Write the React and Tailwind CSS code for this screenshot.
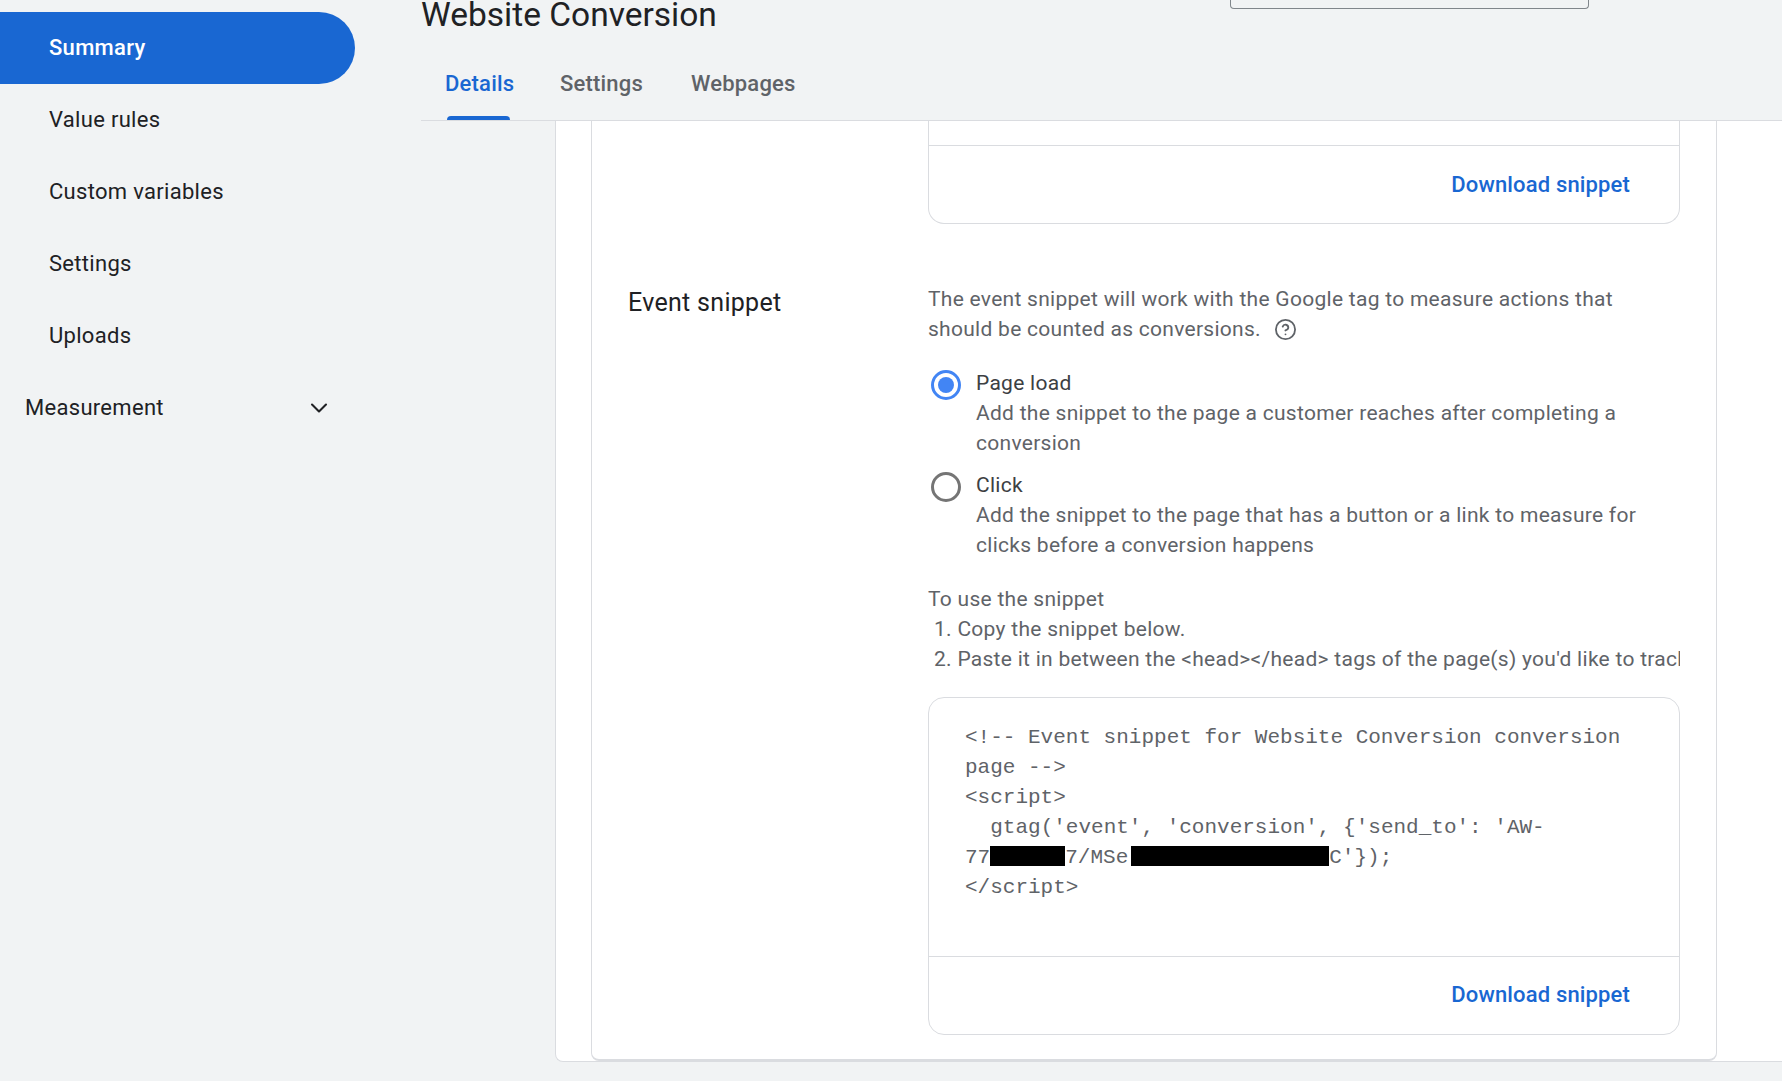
import React from "react";
import { ChevronDown, CircleHelp } from "lucide-react";

const navItems = ["Value rules", "Custom variables", "Settings", "Uploads"];

function Sidebar() {
  return (
    <aside className="w-[421px] shrink-0 pt-3 font-['Roboto',sans-serif] text-[22px] tracking-[0.3px] text-[#202124]">
      <div className="flex h-[72px] w-[355px] items-center rounded-r-[36px] bg-[#1967d2] pb-[1px] pl-[49px] font-medium text-white">
        Summary
      </div>
      {navItems.map((item) => (
        <div key={item} className="flex h-[72px] w-[355px] items-center pb-[1px] pl-[49px]">
          {item}
        </div>
      ))}
      <div className="flex h-[72px] w-[355px] items-center justify-between pb-[1px] pl-[25px] pr-[22px]">
        <span>Measurement</span>
        <ChevronDown size={28} strokeWidth={1.8} />
      </div>
    </aside>
  );
}

function DownloadRow() {
  return (
    <div className="flex h-[78px] items-center justify-end border-t border-[#dadce0] pb-[1px] pr-[49px] text-[22px] font-medium tracking-[0.15px] text-[#1967d2]">
      Download snippet
    </div>
  );
}

function Radio({ checked }) {
  return (
    <span
      className={`mt-[2px] flex h-[30px] w-[30px] shrink-0 items-center justify-center rounded-full border-[3.5px] ${
        checked ? "border-[#4285f4]" : "border-[#757575]"
      }`}
    >
      {checked && <span className="h-[16px] w-[16px] rounded-full bg-[#4285f4]" />}
    </span>
  );
}

function RadioOption({ checked, title, text }) {
  return (
    <div className="flex gap-[15px] pl-[3px]">
      <Radio checked={checked} />
      <div>
        <div className="text-[#3c4043]">{title}</div>
        <div>{text}</div>
      </div>
    </div>
  );
}

function App() {
  return (
    <div className="flex h-[1081px] w-[1782px] overflow-hidden bg-[#f1f3f4] font-['Roboto',sans-serif]">
      <Sidebar />
      <main className="flex min-w-0 flex-1 flex-col">
        <header className="h-[121px] shrink-0 border-b border-[#dadce0]">
          <div className="flex h-[36px] items-start justify-between pr-[193px]">
            <h1 className="mt-[-6px] text-[33.5px] leading-[42px] text-[#202124]">Website Conversion</h1>
            <div className="h-[9px] w-[359px] rounded-b border-x border-b border-[#80868b]" />
          </div>
          <nav className="mt-[25px] flex gap-[48px] pl-[24px] text-[22px] font-medium tracking-[0.2px] text-[#5f6368]">
            <div className="relative h-[59px] w-[67px] pt-[6px] text-[#1967d2]">
              Details
              <span className="absolute inset-x-[2px] bottom-0 h-[4px] rounded-t bg-[#1967d2]" />
            </div>
            <div className="pt-[6px]">Settings</div>
            <div className="pt-[6px]">Webpages</div>
          </nav>
        </header>

        <div className="ml-[134px] h-[941px] shrink-0 rounded-bl-lg border-b border-l border-[#dadce0] bg-white pl-[35px]">
          <div className="h-[940px] w-[1126px] rounded-b-lg border-x border-b-2 border-[#dadce0] px-[36px]">
            <div className="ml-[300px] h-[103px] overflow-hidden rounded-b-2xl border-x border-b border-[#dadce0]">
              <div className="h-[24px]" />
              <DownloadRow />
            </div>
            <div className="mt-[60px] flex text-[21px] tracking-[0.28px] text-[#5f6368]">
              <div className="w-[300px] shrink-0 text-[25px] tracking-[0.3px] text-[#202124]">Event snippet</div>
              <div className="min-w-0 flex-1 leading-[30px]">
                <p>
                  The event snippet will work with the Google tag to measure actions that should be counted as conversions.
                  <CircleHelp size={23} strokeWidth={1.9} className="ml-[13px] inline-block translate-y-[-1px]" />
                </p>
                <div className="mt-[24px]">
                  <RadioOption checked title="Page load" text="Add the snippet to the page a customer reaches after completing a conversion" />
                </div>
                <div className="mt-[12px]">
                  <RadioOption title="Click" text="Add the snippet to the page that has a button or a link to measure for clicks before a conversion happens" />
                </div>
                <p className="mt-[24px]">To use the snippet</p>
                <ol className="overflow-hidden whitespace-nowrap pl-[6px]">
                  <li>1. Copy the snippet below.</li>
                  <li>2. Paste it in between the &lt;head&gt;&lt;/head&gt; tags of the page(s) you'd like to track</li>
                </ol>
                <div className="mt-[23px] h-[338px] rounded-2xl border border-[#dadce0]">
                  <pre className="h-[258px] whitespace-pre-wrap px-[36px] pt-[25px] font-['Liberation_Mono',monospace] text-[21px] leading-[30px] tracking-normal text-[#5f6368]">
                    {"<!-- Event snippet for Website Conversion conversion page -->\n<script>\n  gtag('event', 'conversion', {'send_to': 'AW-\n77"}
                    <span className="inline-block h-[20px] w-[75px] translate-y-[3px] bg-black" />
                    {"7/MSe"}
                    <span className="ml-[3px] inline-block h-[20px] w-[198px] translate-y-[3px] bg-black" />
                    {"C'});\n</script>"}
                  </pre>
                  <DownloadRow />
                </div>
              </div>
            </div>
          </div>
        </div>
      </main>
    </div>
  );
}

export default App;
